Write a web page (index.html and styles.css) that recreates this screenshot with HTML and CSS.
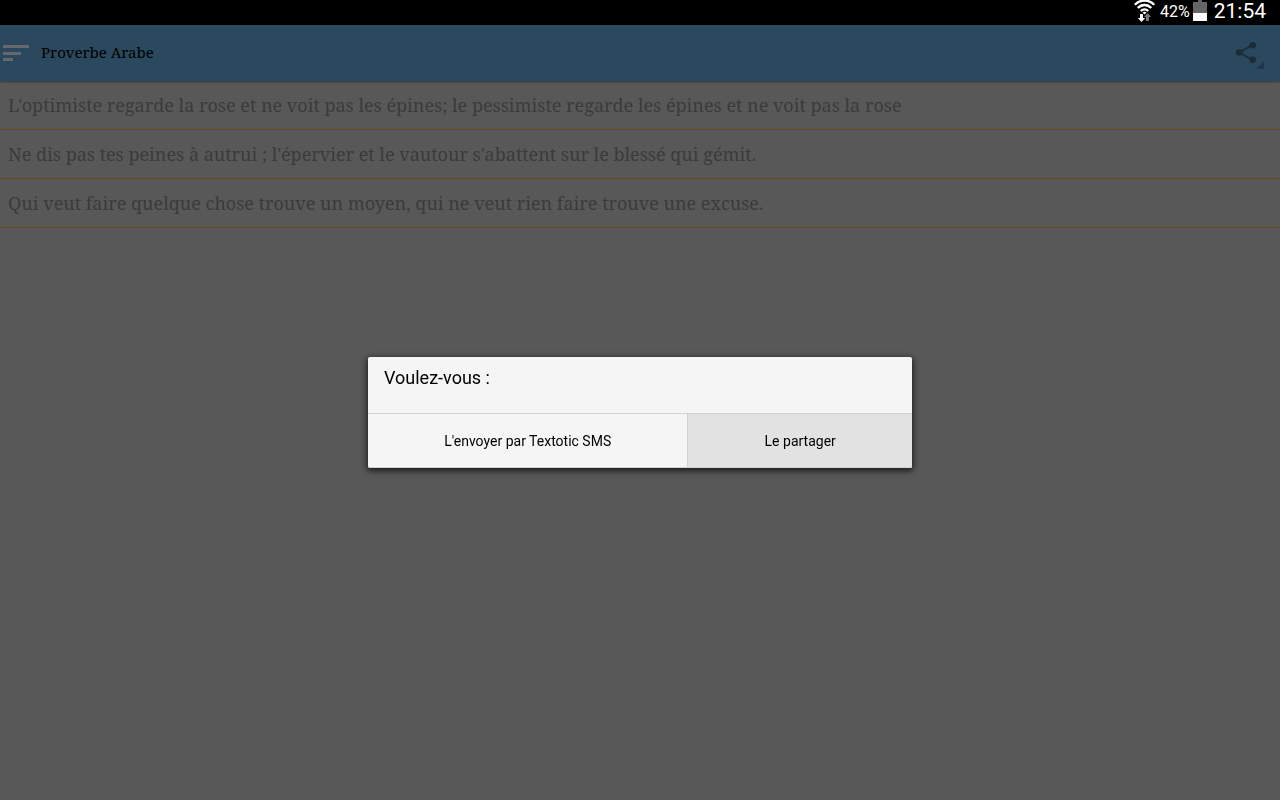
FILE: index.html
```html
<!DOCTYPE html>
<html lang="fr">
<head>
    <meta charset="UTF-8">
    <meta name="viewport" content="width=device-width, initial-scale=1.0">
    <title>Proverbe Arabe</title>
    <link rel="stylesheet" href="styles.css">
</head>
<body>
    <!-- Barre d'état -->
    <div class="status-bar">
        <svg class="wifi" width="22" height="24" viewBox="0 0 22 24" aria-hidden="true">
            <g fill="none" stroke="#fff" stroke-width="2.400">
                <path d="M.8 4.800C6-.8 15-.8 20.200 4.800"/>
                <path d="M3.800 8C7.500 4 13.500 4 17.200 8"/>
                <path d="M6.800 11C9 8.800 12 8.800 14.200 11"/>
            </g>
            <path fill="#fff" d="M8.500 12.600C9.500 11.600 11.500 11.600 12.500 12.600L10.500 14.500z"/>
            <path fill="#fff" d="M6 14h3v4h2.200l-3.700 4-3.700-4H6z"/>
            <path fill="#777" d="M12 21h3v-4h2.200l-3.700-4-3.500 4h2z"/>
        </svg>
        <span class="battery-level">42%</span>
        <svg class="battery" width="14" height="24" viewBox="0 0 14 24" aria-hidden="true">
            <path fill="#666" d="M5 0h4v2h5v11H0V2h5z"/>
            <path fill="#fff" d="M0 13h14v8H0z"/>
        </svg>
        <span class="clock">21:54</span>
    </div>

    <header class="app-bar">
        <button class="icon-button" type="button" aria-label="Menu">
            <svg width="26" height="18" viewBox="0 0 26 18">
                <path fill="#66696c" d="M0 1h26v3H0zM0 8h18v3H0zM0 14h10v3H0z"/>
            </svg>
        </button>
        <h1 class="title">Proverbe Arabe</h1>
        <button class="icon-button share" type="button" aria-label="Partager">
            <svg width="30" height="32" viewBox="0 0 30 32">
                <path fill="none" stroke="#1c2b36" stroke-width="2" d="M18.500 8L5.200 15.500L18.500 23"/>
                <g fill="#1c2b36">
                    <circle cx="18.700" cy="8.200" r="3.300"/>
                    <circle cx="5.200" cy="15.500" r="3.300"/>
                    <circle cx="18.700" cy="22.800" r="3.300"/>
                </g>
                <path fill="#21364d" d="M30 24v8h-8z"/>
            </svg>
        </button>
    </header>

    <!-- Liste des proverbes -->
    <ul class="proverbs">
        <li>L'optimiste regarde la rose et ne voit pas les épines; le pessimiste regarde les épines et ne voit pas la rose</li>
        <li>Ne dis pas tes peines à autrui ; l'épervier et le vautour s'abattent sur le blessé qui gémit.</li>
        <li>Qui veut faire quelque chose trouve un moyen, qui ne veut rien faire trouve une excuse.</li>
    </ul>

    <!-- Boîte de dialogue -->
    <div class="overlay">
        <div class="dialog" role="dialog" aria-modal="true" aria-labelledby="dialog-title">
            <h2 class="dialog-title" id="dialog-title">Voulez-vous :</h2>
            <div class="dialog-buttons">
                <button type="button">L'envoyer par Textotic SMS</button>
                <button class="pressed" type="button">Le partager</button>
            </div>
        </div>
    </div>
</body>
</html>
```
FILE: styles.css
```css
* { box-sizing: border-box; }
body { margin: 0; background-color: #585858; font-family: Roboto, sans-serif; }
button { border: none; background: none; padding: 0; font: inherit; cursor: pointer; }
svg { display: block; }

.status-bar { display: flex; justify-content: flex-end; height: 25px; padding-right: 14px; background-color: #000; color: #fff; line-height: 22px; }
.battery-level { margin: 0 3px 0 4px; font-size: 16px; line-height: 24px; }
.clock { margin-left: 7px; font-size: 21px; }

.app-bar { display: flex; align-items: center; height: 56px; padding: 0 16px 0 3px; background-color: #2b495e; box-shadow: 0 1px 2px rgba(0, 0, 0, 0.4); }
.title { flex: 1; margin: 0 0 0 12px; padding-bottom: 2px; color: #000; font: 15px/22px "Noto Serif", "DejaVu Serif", serif; }

.proverbs { margin: 0; padding: 0; list-style: none; color: #3b3b3b; font: 18px/48px "Noto Serif", "DejaVu Serif", serif; }
.proverbs li { padding: 0 8px; border-bottom: 1px solid #67491a; }

.overlay { position: fixed; inset: 25px 0 0; display: flex; align-items: center; justify-content: center; }
.dialog { width: 544px; max-width: 90%; background-color: #f5f5f5; border-radius: 2px; overflow: hidden; box-shadow: 0 2px 6px 1px rgba(0, 0, 0, 0.7); }
.dialog-title { margin: 0; padding: 0 16px; height: 56px; font-size: 18px; font-weight: 400; line-height: 42px; }
.dialog-buttons { display: flex; border-top: 1px solid #d2d2d2; }
.dialog-buttons button { flex: 1 1 auto; height: 54px; font-size: 14px; color: #000; border-bottom: 1px solid #d2d2d2; }
.dialog-buttons .pressed { background-color: #e2e2e2; border-left: 1px solid #d2d2d2; }
```
